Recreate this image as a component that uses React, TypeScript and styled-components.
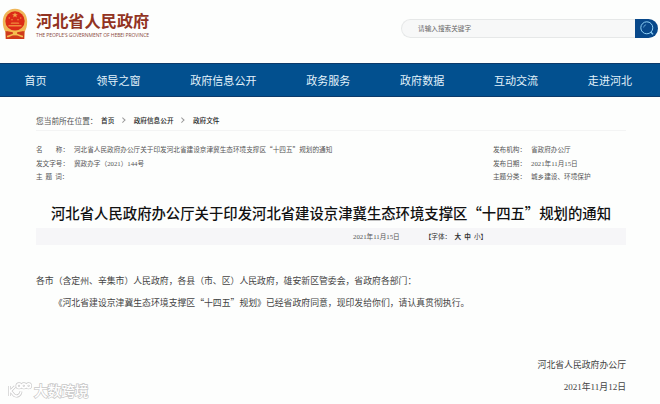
import * as React from "react";
import styled, { createGlobalStyle } from "styled-components";

const GlobalStyle = createGlobalStyle`
  * {
    box-sizing: border-box;
  }

  body {
    margin: 0;
    background: #fdfefd;
    color: #444;
    font-family: "Noto Sans CJK SC", "Liberation Sans", sans-serif;
    text-spacing-trim: space-all;
    overflow: hidden;
  }
`;

const navItems = [
  "首页",
  "领导之窗",
  "政府信息公开",
  "政务服务",
  "政府数据",
  "互动交流",
  "走进河北",
];

/** Sets digits at half the width of a Chinese character. */
function withDigits(text: string) {
  return text
    .split(/(\d+)/)
    .map((part, i) => (i % 2 ? <Digits key={i}>{part}</Digits> : part));
}

function Emblem() {
  return (
    <svg width="26" height="32" viewBox="0 0 26 32">
      <path
        d="M13 .8C5.5.8.8 6.5.8 13.500c0 5 1.200 8 2.700 10.500L3.800 31h18.400l.3-7c1.500-2.500 2.700-5.500 2.700-10.500C25.200 6.500 20.500.8 13 .8z"
        fill="#efb659"
      />
      <circle cx="13" cy="13" r="9.7" fill="#dc2b17" />
      <path
        d="M13 4.300l.8 1.900h2.100l-1.700 1.300.7 2.100-1.900-1.300-1.900 1.300.7-2.100L10.100 6.200h2.100z"
        fill="#f4a74c"
      />
      <g fill="#f08c3c">
        <circle cx="7.3" cy="10" r=".8" />
        <circle cx="10" cy="11.8" r=".8" />
        <circle cx="16" cy="11.8" r=".8" />
        <circle cx="18.7" cy="10" r=".8" />
        <path d="M9.500 14.500h7l1 1.300h-9zM6.500 17h13v1.500h-13z" />
      </g>
      <path d="M3.500 23l5.500.5h8l5.500-.5-.3 8H3.800z" fill="#cf3a1c" />
      <path
        d="M4 22.500c3-.8 4.500 1 7 1h4c2.500 0 4-1.800 7-1M5 28.500c2.500 0 3.500-2 8-2s5.500 2 8 2"
        fill="none"
        stroke="#f4bd50"
        strokeWidth="1.5"
      />
      <circle cx="13" cy="25" r="2.3" fill="#f4bd50" />
    </svg>
  );
}

function SearchIcon() {
  return (
    <svg width="16" height="16" viewBox="0 0 16 16" fill="none" stroke="#8fd0f5">
      <circle cx="7.8" cy="7.8" r="6" />
      <path d="M4.600 7.500a3.200 3.200 0 0 1 2.500-2.800" strokeWidth=".6" />
      <path d="M12 12.200l2 2.200" strokeWidth="1.3" />
    </svg>
  );
}

function WatermarkIcon() {
  const shape = (
    <>
      <path d="M2.500 4v10M8 4.500L3.500 9l4 4.500c3 1.500 6-.5 6.500-4" />
      <circle cx="12" cy="3.8" r="2" />
      <circle cx="16.8" cy="3.8" r="2" />
      <circle cx="21.6" cy="3.8" r="2" />
    </>
  );

  return (
    <svg width="25" height="17" viewBox="0 0 25 17" fill="none">
      <g stroke="#c8c8c8" strokeWidth="3">
        {shape}
      </g>
      <g stroke="#fff" strokeWidth="1.7">
        {shape}
      </g>
    </svg>
  );
}

function MetaRow({ label, value }: { label: string; value?: string }) {
  return (
    <MetaLine>
      <MetaLabel>{label}：</MetaLabel>
      {value && <span>{withDigits(value)}</span>}
    </MetaLine>
  );
}

function App() {
  return (
    <Page>
      <GlobalStyle />
      <Header>
        <Brand>
          <Emblem />
          <div>
            <BrandName>河北省人民政府</BrandName>
            <BrandCaption>THE PEOPLE'S GOVERNMENT OF HEBEI PROVINCE</BrandCaption>
          </div>
        </Brand>
        <Search>
          <Placeholder>请输入搜索关键字</Placeholder>
          <SearchButton aria-label="搜索">
            <SearchIcon />
          </SearchButton>
        </Search>
      </Header>
      <Nav>
        {navItems.map((item) => (
          <NavItem key={item}>{item}</NavItem>
        ))}
      </Nav>
      <Content>
        <Breadcrumb>
          <Location>您当前所在位置：</Location>
          <Crumb>首页</Crumb>
          <Chevron />
          <Crumb>政府信息公开</Crumb>
          <Chevron />
          <Crumb>政府文件</Crumb>
        </Breadcrumb>
        <Meta>
          <div>
            <MetaRow
              label="名　　称"
              value="河北省人民政府办公厅关于印发河北省建设京津冀生态环境支撑区“十四五”规划的通知"
            />
            <MetaRow label="发文字号" value="冀政办字（2021）144号" />
            <MetaRow label="主  题  词" />
          </div>
          <div>
            <MetaRow label="发布机构" value="省政府办公厅" />
            <MetaRow label="发布日期" value="2021年11月15日" />
            <MetaRow label="主题分类" value="城乡建设、环境保护" />
          </div>
        </Meta>
        <Title>
          河北省人民政府办公厅关于印发河北省建设京津冀生态环境支撑区“十四五”规划的通知
        </Title>
        <InfoBar>
          <span>{withDigits("2021年11月15日")}</span>
          <FontSizes>
            <span>【字体：</span>
            <b>大</b>
            <b>中</b>
            <span>小】</span>
          </FontSizes>
        </InfoBar>
        <Article>
          <Paragraph>
            各市（含定州、辛集市）人民政府，各县（市、区）人民政府，雄安新区管委会，省政府各部门：
          </Paragraph>
          <Paragraph $indent>
            《河北省建设京津冀生态环境支撑区“十四五”规划》已经省政府同意，现印发给你们，请认真贯彻执行。
          </Paragraph>
          <Signature>
            <Paragraph>河北省人民政府办公厅</Paragraph>
            <Paragraph>{withDigits("2021年11月12日")}</Paragraph>
          </Signature>
        </Article>
      </Content>
      <Watermark>
        <WatermarkIcon />
        <span>大数跨境</span>
      </Watermark>
    </Page>
  );
}

const Page = styled.div`
  position: relative;
  width: 660px;
  height: 404px;
  overflow: hidden;
  white-space: nowrap;
`;

const Digits = styled.span`
  font-family: "Liberation Serif", serif;
  font-size: 1.02em;
`;

const Header = styled.header`
  display: flex;
  justify-content: space-between;
  height: 63px;
  padding: 8px 2px 0 1.5px;
`;

const Brand = styled.div`
  display: flex;
  gap: 8.5px;
`;

const BrandName = styled.div`
  height: 24px;
  color: #923322;
  font-size: 16.2px;
  font-weight: 700;
  line-height: 24px;
`;

const BrandCaption = styled.div`
  color: #8a4a40;
  font-family: "Open Sans", sans-serif;
  font-size: 5px;
  line-height: 7px;
  letter-spacing: -0.07px;
`;

const Search = styled.div`
  display: flex;
  align-items: center;
  justify-content: space-between;
  width: 257px;
  height: 19px;
  margin-top: 10.5px;
  padding-left: 16px;
  border: 1px solid #e6e8e8;
  border-right: 0;
  border-radius: 10px;
  background: #f7f8f8;
`;

const Placeholder = styled.span`
  color: #666;
  font-size: 6.65px;
`;

const SearchButton = styled.button`
  display: flex;
  align-items: center;
  justify-content: center;
  width: 23px;
  height: 19px;
  padding: 0;
  border: 0;
  border-radius: 0 10px 10px 0;
  background: #08488a;
`;

const Nav = styled.nav`
  display: flex;
  align-items: center;
  gap: 49.7px;
  height: 34px;
  padding-left: 24.5px;
  border-top: 1px solid #0b3a6b;
  border-bottom: 1px solid #0b3a6b;
  background: #02508f;
`;

const NavItem = styled.a`
  color: #e4f3fb;
  font-size: 11.05px;
  line-height: 32px;
`;

const Content = styled.main`
  padding: 13px 34px 0 36px;
`;

const Breadcrumb = styled.div`
  display: flex;
  align-items: center;
  height: 21px;
  border-bottom: 1px solid #f3f4f4;
`;

const Location = styled.span`
  width: 61px;
  color: #555;
  font-size: 7.7px;
`;

const Crumb = styled.a`
  margin-left: 4px;
  color: #222;
  font-size: 6.65px;
  font-weight: 500;

  & ~ & {
    margin-left: 9.4px;
  }
`;

const Chevron = styled.i`
  width: 3.5px;
  height: 3.5px;
  margin-left: 6.5px;
  border-top: 1px solid #999;
  border-right: 1px solid #999;
  transform: rotate(45deg);
`;

const Meta = styled.div`
  display: grid;
  grid-template-columns: 457px auto;
  margin-top: 12px;
  color: #555;
  font-size: 6.64px;
`;

const MetaLine = styled.div`
  display: flex;
  height: 13.7px;
  line-height: 13.7px;
`;

const MetaLabel = styled.span`
  width: 38px;
  white-space: pre;
`;

const Title = styled.h1`
  margin: 17.3px 0 0;
  color: #111;
  font-size: 14.37px;
  font-weight: 500;
  line-height: 24px;
  text-align: center;
`;

const InfoBar = styled.div`
  display: flex;
  align-items: center;
  height: 17px;
  margin-top: 2.6px;
  padding-left: 317px;
  background: #f6f6f8;
  color: #555;
  font-size: 6.64px;
`;

const FontSizes = styled.div`
  display: flex;
  gap: 3.2px;
  margin-left: 25px;
  color: #333;
`;

const Article = styled.article`
  margin-top: 25px;
  color: #444;
  font-size: 8.85px;
`;

const Paragraph = styled.p<{ $indent?: boolean }>`
  margin: 0;
  line-height: 21.7px;
  text-indent: ${(props) => (props.$indent ? "2em" : 0)};
`;

const Signature = styled.div`
  margin-top: 41px;
  text-align: right;
`;

const Watermark = styled.div`
  position: absolute;
  left: 7px;
  bottom: 5px;
  display: flex;
  align-items: center;
  gap: 2px;
  color: #fff;
  font-size: 13.6px;
  font-weight: 500;
  line-height: 17px;
  -webkit-text-stroke: 1.5px #c8c8c8;
  paint-order: stroke fill;
`;

export default App;
